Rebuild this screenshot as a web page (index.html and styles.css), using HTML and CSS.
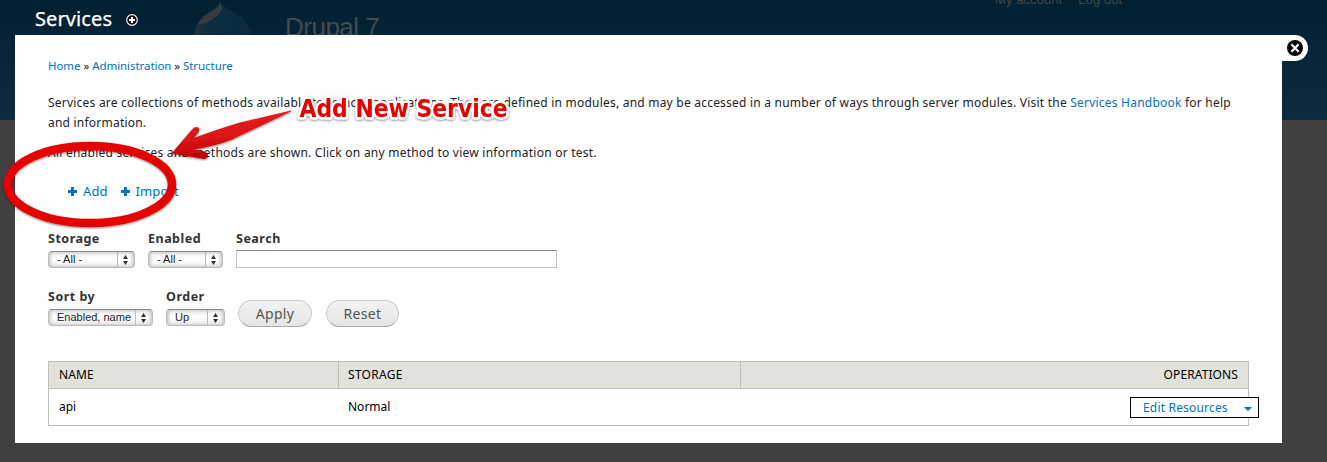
FILE: index.html
```html
<!DOCTYPE html>
<html lang="en">
<head>
<meta charset="utf-8">
<title>Services</title>
<link rel="stylesheet" href="styles.css">
</head>
<body>
<div class="backdrop">
  <svg class="drop" width="62" height="64" viewBox="0 0 62 64">
    <defs><linearGradient id="dg" x1="0" y1="0" x2="1" y2="0"><stop offset="0" stop-color="#1f3038"/><stop offset=".3" stop-color="#0d2c3d"/><stop offset=".8" stop-color="#082a40"/><stop offset="1" stop-color="#162a36"/></linearGradient></defs>
    <path d="M28 0C31 7 39 8 48 15C55 21 59 29 59 38C59 55 45 64 30 64C14 64 2 53 2 37C2 26 7 18 14 13C21 8 26 7 28 0Z" fill="url(#dg)"/>
    <path d="M28 1C30 7 32 7 26 14C18 21 9 25 6 23C9 18 13 14 17 12C23 9 27 6 28 1Z" fill="#343d42"/>
  </svg>
  <span class="site">Drupal 7</span>
  <span class="usermenu"><span>My account</span><span>Log out</span></span>
</div>
<div class="overlay">
  <header class="titlebar">
    <h1>Services</h1>
    <svg width="12" height="12" viewBox="0 0 12 12"><circle cx="6" cy="6" r="5.3" fill="#111" stroke="#eee" stroke-width="1.2"/><path d="M6 3v6M3 6h6" stroke="#fff" stroke-width="2"/></svg>
  </header>
  <main class="modal">
    <div class="close"><svg width="16" height="16" viewBox="0 0 16 16"><circle cx="8" cy="8" r="8" fill="#000"/><path d="M4.3 4.3l7.4 7.4M11.7 4.3l-7.4 7.4" stroke="#fff" stroke-width="2.2"/></svg></div>
    <nav class="crumbs"><a>Home</a> » <a>Administration</a> » <a>Structure</a></nav>
    <p class="intro">Services are collections of methods available to remote applications. They are defined in modules, and may be accessed in a number of ways through server modules. Visit the <a>Services Handbook</a> for help<br>and information.</p>
    <p class="intro second">All enabled services and methods are shown. Click on any method to view information or test.</p>
    <ul class="actions">
      <li><svg width="9" height="9" viewBox="0 0 9 9"><path d="M4.5 0v9M0 4.5h9" stroke="#0074bd" stroke-width="3"/></svg><a>Add</a></li>
      <li><svg width="9" height="9" viewBox="0 0 9 9"><path d="M4.5 0v9M0 4.5h9" stroke="#0074bd" stroke-width="3"/></svg><a>Import</a></li>
    </ul>
    <div class="filters">
      <div class="field storage"><label>Storage</label><div class="select"><span>- All -</span><i><svg width="5" height="10" viewBox="0 0 5 10"><path d="M0 4L2.5 0L5 4ZM0 6L2.5 10L5 6Z" fill="#333"/></svg></i></div></div>
      <div class="field enabled"><label>Enabled</label><div class="select"><span>- All -</span><i><svg width="5" height="10" viewBox="0 0 5 10"><path d="M0 4L2.5 0L5 4ZM0 6L2.5 10L5 6Z" fill="#333"/></svg></i></div></div>
      <div class="field search"><label>Search</label><div class="input"></div></div>
    </div>
    <div class="filters sorting">
      <div class="field sort"><label>Sort by</label><div class="select"><span>Enabled, name</span><i><svg width="5" height="10" viewBox="0 0 5 10"><path d="M0 4L2.5 0L5 4ZM0 6L2.5 10L5 6Z" fill="#333"/></svg></i></div></div>
      <div class="field order"><label>Order</label><div class="select"><span>Up</span><i><svg width="5" height="10" viewBox="0 0 5 10"><path d="M0 4L2.5 0L5 4ZM0 6L2.5 10L5 6Z" fill="#333"/></svg></i></div></div>
      <button class="apply">Apply</button>
      <button class="reset">Reset</button>
    </div>
    <div class="table">
      <div class="row head"><span>NAME</span><span>STORAGE</span><span class="ops">OPERATIONS</span></div>
      <div class="row"><span>api</span><span>Normal</span><span class="ops"><span class="drop-button"><a>Edit Resources</a><svg width="8" height="4" viewBox="0 0 8 4"><path d="M0 0H8L4 4Z" fill="#0074bd"/></svg></span></span></div>
    </div>
  </main>
</div>
<svg class="notes" width="540" height="240" viewBox="0 0 540 240">
  <defs>
    <linearGradient id="ag" x1="0" y1="0" x2=".25" y2="1"><stop offset="0" stop-color="#ee2222"/><stop offset=".6" stop-color="#dc1414"/><stop offset="1" stop-color="#b80000"/></linearGradient>
    <filter id="sh" x="-10%" y="-20%" width="120%" height="140%"><feDropShadow dx="0" dy="1" stdDeviation="1" flood-color="#000" flood-opacity=".5"/></filter>
  </defs>
  <ellipse cx="90" cy="184.500" rx="82" ry="38.500" fill="none" stroke="#e60000" stroke-width="8.500" filter="url(#sh)"/>
  <path d="M291 110.500L240 122.500Q215 130 194 138L199 131.500Q200 128 197 127Q194 127 192.500 129L171.500 153.500L204 159Q208 158.500 208 155.500Q207 152.500 203 151L194 149.500Q216 146 232 139.500L291 111.500Z" fill="url(#ag)" filter="url(#sh)"/>
  <text class="note" x="299.500" y="117" textLength="208" lengthAdjust="spacingAndGlyphs" filter="url(#sh)">Add New Service</text>
</svg>
</body>
</html>
```
FILE: styles.css
```css
* { box-sizing: border-box; }
body { margin: 0; height: 462px; overflow: hidden; position: relative; background: #404040; color: #222; font: 12px/20px "Noto Sans", sans-serif; }
a { color: #0070c0; }
.backdrop { position: absolute; left: 0; top: 0; width: 100%; height: 120px; background: linear-gradient(#022031, #0d2b3f); overflow: hidden; }
.drop { position: absolute; left: 192px; top: 1px; }
.site { position: absolute; left: 285px; top: 13px; font: 26px/28px "Liberation Sans", Arial, sans-serif; letter-spacing: -.5px; color: #434b50; }
.usermenu { position: absolute; left: 995px; top: -8px; display: flex; gap: 16px; font: 13px/16px "Liberation Sans", Arial, sans-serif; letter-spacing: .08px; color: #3f474c; }
.overlay { position: relative; padding-left: 15px; }
.titlebar { height: 35px; padding: 4px 0 0 20px; display: flex; align-items: center; gap: 13px; }
h1 { margin: -2px 0 0; color: #fff; font: 20px/28px "Noto Sans", sans-serif; letter-spacing: .1px; width: 78px; white-space: nowrap; -webkit-text-stroke: .25px #fff; }
.modal { position: relative; width: 1267px; height: 408px; background: #fff; padding: 21px 33px 0; }
.close { position: absolute; right: -26px; top: 0; width: 26px; height: 26px; background: #fff; border-radius: 0 13px 13px 0; padding: 5px; line-height: 0; }
.crumbs { font-size: 11.500px; letter-spacing: -.06px; }
.intro { margin: 17px 0 0; white-space: nowrap; letter-spacing: .22px; }
.intro.second { margin-top: 10px; letter-spacing: .24px; }
.actions { list-style: none; display: flex; gap: 13px; margin: 18px 0 0; padding: 0 0 0 20px; font-size: 13px; letter-spacing: .1px; }
.actions li { display: flex; align-items: center; gap: 6px; }
.filters { display: flex; align-items: flex-start; margin-top: 28px; }
.sorting { margin-top: 20px; }
.field label { display: block; font-weight: bold; font-size: 12.500px; letter-spacing: .5px; line-height: 19px; height: 22px; color: #333; white-space: nowrap; }
.search label { height: 21px; }
.sorting label { line-height: 18px; height: 21px; }
.select { height: 17px; border: 1px solid #bbb; border-radius: 4px; border-top-color: #888; background: linear-gradient(#e8e8e8, #fff 45%, #ededed); display: flex; justify-content: space-between; padding-left: 8px; font: 11px/15px "Liberation Sans", Arial, sans-serif; color: #222; box-shadow: inset 2px 0 3px #ccc, inset -2px 0 3px #ccc; }
.select i { width: 17px; padding-right: 2px; border-left: 1px solid #bbb; display: flex; align-items: center; justify-content: center; }
.storage { width: 87px; margin-right: 13px; }
.enabled { width: 75px; margin-right: 13px; }
.search { width: 321px; }
.input { height: 18px; border: 1px solid #c4c4c4; border-top-color: #888; }
.sort { width: 105px; margin-right: 13px; }
.order { width: 59px; margin-right: 13px; }
button { margin: 12px 14px 0 0; padding: 0; height: 27px; border: 1px solid #ccc; border-bottom-color: #aaa; border-radius: 14px; background: linear-gradient(#f2f2f2, #e5e5e5); color: #555; font: 14px/24px "Noto Sans", sans-serif; letter-spacing: .3px; }
.apply { width: 74px; }
.reset { width: 73px; }
.table { margin-top: 34px; width: 1201px; border: 1px solid #bebfb9; }
.row { display: grid; grid-template-columns: 289px 402px 1fr; height: 36px; line-height: 35px; color: #000; }
.row > span { padding: 0 10px; }
.row.head { height: 27px; line-height: 26px; letter-spacing: .1px; background: #e1e2dc; border-bottom: 1px solid #bebfb9; }
.row.head > span + span { border-left: 1px solid #bebfb9; padding-left: 9px; }
.row.head > span:nth-child(2) { letter-spacing: .3px; }
.row > .ops { display: flex; justify-content: flex-end; }
.drop-button { margin: 8px -21px 0 0; width: 129px; height: 21px; border: 1px solid #000; background: #fff; line-height: 19px; padding: 0 6px 0 12px; display: flex; align-items: center; justify-content: space-between; letter-spacing: .18px; }
.drop-button svg { margin-top: 2px; }
.notes { position: absolute; left: 0; top: 0; }
.note { font: bold 24px "DejaVu Sans", sans-serif; fill: #e60000; stroke: #fff; stroke-width: 5px; stroke-linejoin: round; paint-order: stroke; }
```
